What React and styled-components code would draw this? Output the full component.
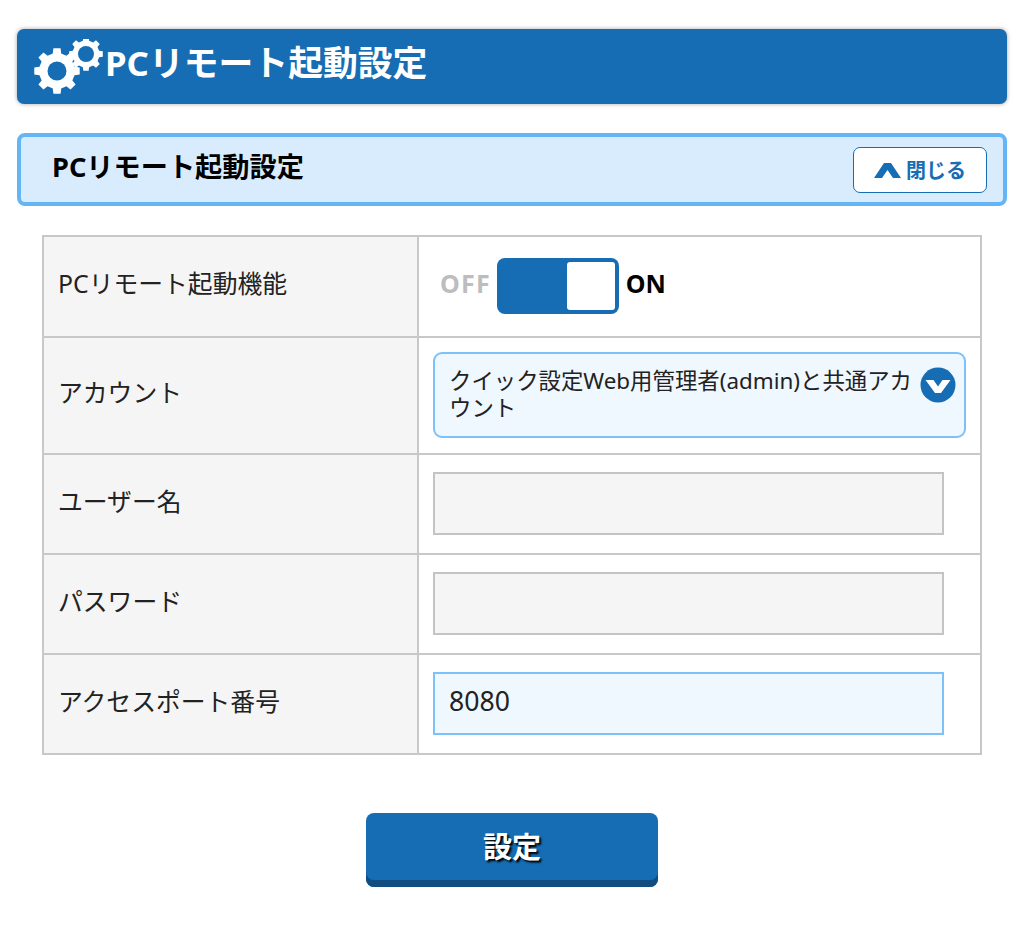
import React from "react";
import styled, { createGlobalStyle } from "styled-components";

const FONT = `"Noto Sans", "Noto Sans CJK JP", sans-serif`;

const Global = createGlobalStyle`
  html, body { margin: 0; padding: 0; background: #fff; }
  body { font-family: ${FONT}; color: #222; }
  * { box-sizing: border-box; }
`;

const Page = styled.div`
  padding: 29px 17px 58px;
  width: 1024px;
`;

const TitleBar = styled.header`
  height: 75px;
  background: #166db4;
  border-radius: 7px;
  box-shadow: 0 0 4px rgba(0, 0, 0, 0.35);
  display: flex;
  align-items: center;
  padding-left: 17px;
  gap: 1px;
`;

const Title = styled.h1`
  margin: 0 0 6px;
  font-size: 34.8px;
  line-height: 1;
  font-weight: 700;
  color: #fff;
`;

const SectionBar = styled.section`
  margin-top: 29px;
  height: 73px;
  background: #d9ecfd;
  border: 4px solid #64b5f6;
  border-radius: 8px;
  display: flex;
  align-items: center;
  justify-content: space-between;
  padding: 0 16px 0 31px;
`;

const SectionTitle = styled.h2`
  margin: 0 0 6px;
  font-size: 27.2px;
  line-height: 1;
  font-weight: 700;
  color: #000;
`;

const CloseButton = styled.button`
  width: 134px;
  height: 46px;
  background: #fff;
  border: 1px solid #166db4;
  border-radius: 7px;
  display: flex;
  align-items: center;
  justify-content: center;
  gap: 5px;
  font-family: ${FONT};
  font-size: 20px;
  font-weight: 700;
  color: #166db4;
  padding: 0;
`;

const FormTable = styled.table`
  margin: 29px 25px 0;
  width: 940px;
  border-collapse: collapse;
  table-layout: fixed;
`;

const Row = styled.tr`
  height: ${(p) => p.$h}px;
`;

const Label = styled.th`
  width: 375px;
  background: #f5f5f5;
  border: 2px solid #c8c8c8;
  padding: 0 0 9px 14px;
  text-align: left;
  font-size: 24.8px;
  font-weight: 400;
  color: #222;
`;

const Cell = styled.td`
  background: #fff;
  border: 2px solid #c8c8c8;
  padding: 0 14px 2px;
`;

const SwitchRow = styled.div`
  display: flex;
  align-items: center;
  margin-left: 7px;
  margin-bottom: 0;
  gap: 7px;
`;

const SwitchText = styled.span`
  font-size: 25px;
  font-weight: 700;
  line-height: 1;
  letter-spacing: ${(p) => (p.$on ? "0" : "1.2px")};
  margin-right: ${(p) => (p.$on ? "0" : "-1px")};
  color: ${(p) => (p.$on ? "#000" : "#bdbdbd")};
  position: relative;
  top: -2px;
`;

const SwitchTrack = styled.div`
  width: 122px;
  height: 56px;
  background: #166db4;
  border-radius: 8px;
  padding: 4px 4px 4px 70px;
`;

const SwitchKnob = styled.div`
  width: 48px;
  height: 48px;
  background: #fff;
  border-radius: 3px;
`;

const Select = styled.div`
  width: 533px;
  height: 86px;
  background: #eff7ff;
  border: 2px solid #7cc1f8;
  border-radius: 9px;
  padding: 13px 8px 0 14px;
  display: flex;
  align-items: flex-start;
  justify-content: space-between;
`;

const SelectText = styled.div`
  width: 470px;
  font-size: 22.4px;
  line-height: 27px;
  color: #222;
  word-break: break-all;
`;

const SelectArrow = styled.svg`
  width: 36px;
  height: 36px;
  flex: none;
  margin-top: 0;
`;

const Input = styled.div`
  width: 511px;
  height: 63px;
  background: ${(p) => (p.$active ? "#eff7ff" : "#f5f5f5")};
  border: 2px solid ${(p) => (p.$active ? "#7cc1f8" : "#c4c4c4")};
  display: flex;
  align-items: center;
  padding: 0 0 5px 14px;
  font-size: 26.6px;
  color: #222;
`;

const Footer = styled.div`
  display: flex;
  justify-content: center;
  margin-top: 58px;
`;

const Submit = styled.button`
  width: 292px;
  height: 74px;
  background: #166db4;
  border: none;
  border-radius: 8px;
  box-shadow: inset 0 -7px 0 #114d80;
  font-family: ${FONT};
  font-size: 29px;
  font-weight: 700;
  color: #fff;
  text-shadow: 2px 2px 2px #000;
  padding: 0 0 10px;
`;

function gearPath(cx, cy, rOuter, rRoot, teeth) {
  const step = (Math.PI * 2) / teeth;
  const pts = [];
  for (let i = 0; i < teeth; i++) {
    const a = i * step - Math.PI / 2;
    const w = step * 0.2;
    const wr = step * 0.3;
    pts.push([a - wr, rRoot], [a - w, rOuter], [a + w, rOuter], [a + wr, rRoot]);
  }
  return (
    pts
      .map(([a, r], i) => `${i ? "L" : "M"}${(cx + r * Math.cos(a)).toFixed(2)} ${(cy + r * Math.sin(a)).toFixed(2)}`)
      .join(" ") + " Z"
  );
}

const GearIcon = () => (
  <svg width="70" height="58" viewBox="0 0 70 58" style={{ flex: "none", marginTop: 3 }}>
    <path d={gearPath(23, 32, 23, 18, 8)} fill="#fff" />
    <circle cx="23" cy="32" r="9.5" fill="#166db4" />
    <path d={gearPath(52, 15, 17, 13.5, 8)} fill="#fff" />
    <circle cx="52" cy="15" r="8" fill="#166db4" />
  </svg>
);

const ChevronUp = () => (
  <svg width="27" height="16" viewBox="0 0 27 16">
    <path d="M0 16 L10 1 H17 L27 16 H19 L13.5 8 L8 16 Z" fill="#166db4" />
  </svg>
);

export default function App() {
  return (
    <Page>
      <Global />
      <TitleBar>
        <GearIcon />
        <Title>PCリモート起動設定</Title>
      </TitleBar>
      <SectionBar>
        <SectionTitle>PCリモート起動設定</SectionTitle>
        <CloseButton>
          <ChevronUp />
          閉じる
        </CloseButton>
      </SectionBar>
      <FormTable>
        <tbody>
          <Row $h={101}>
            <Label>PCリモート起動機能</Label>
            <Cell>
              <SwitchRow>
                <SwitchText>OFF</SwitchText>
                <SwitchTrack>
                  <SwitchKnob />
                </SwitchTrack>
                <SwitchText $on>ON</SwitchText>
              </SwitchRow>
            </Cell>
          </Row>
          <Row $h={117}>
            <Label>アカウント</Label>
            <Cell>
              <Select>
                <SelectText>クイック設定Web用管理者(admin)と共通アカウント</SelectText>
                <SelectArrow viewBox="0 0 36 36">
                  <circle cx="18" cy="18" r="17.5" fill="#166db4" />
                  <path d="M5.5 13 H13.5 L18 19.5 L22.5 13 H30.5 L21 26 H15 Z" fill="#fff" />
                </SelectArrow>
              </Select>
            </Cell>
          </Row>
          <Row $h={100}>
            <Label>ユーザー名</Label>
            <Cell>
              <Input />
            </Cell>
          </Row>
          <Row $h={100}>
            <Label>パスワード</Label>
            <Cell>
              <Input />
            </Cell>
          </Row>
          <Row $h={100}>
            <Label>アクセスポート番号</Label>
            <Cell>
              <Input $active>8080</Input>
            </Cell>
          </Row>
        </tbody>
      </FormTable>
      <Footer>
        <Submit>設定</Submit>
      </Footer>
    </Page>
  );
}
